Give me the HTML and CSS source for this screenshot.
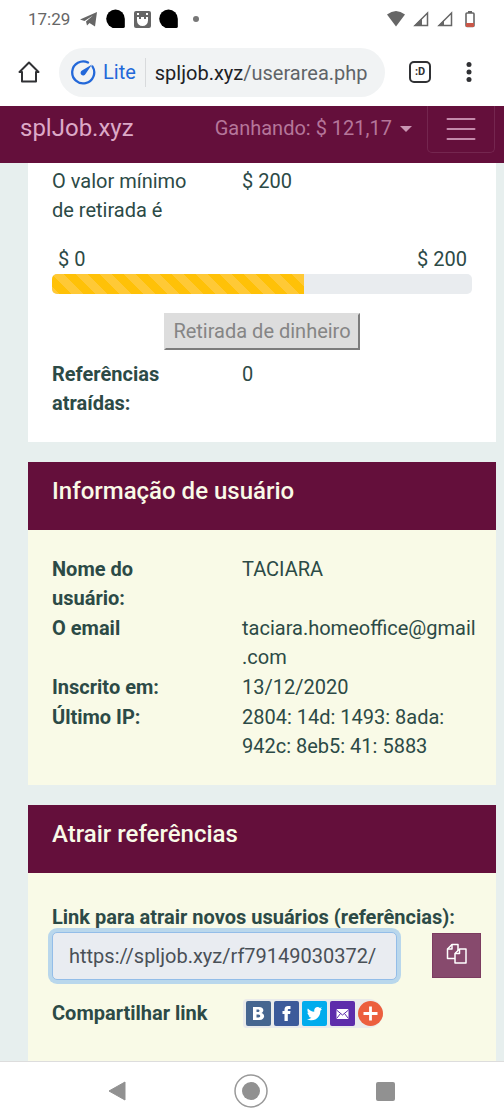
FILE: index.html
```html
<!DOCTYPE html>
<html lang="pt">
<head>
<meta charset="utf-8">
<meta name="viewport" content="width=device-width, initial-scale=1">
<title>splJob.xyz</title>
<link rel="stylesheet" href="styles.css">
</head>
<body>
<div class="screen">
  <div class="status">
    <span class="clock">17:29</span>
    <svg width="18" height="16" viewBox="0 0 18 16"><path fill="#666" d="M0 8.500 17 1 15 15.500 9.500 12 7 14.500 6 10.500 13 4.500 4.500 10z"/></svg>
    <svg class="blob" width="20" height="20" viewBox="0 0 20 20"><path d="M9.500 0.500a9.300 9.300 0 0 1 9.300 9.300V17.500q0 1.600-1.600 1.600H9.500A9.300 9.300 0 0 1 9.500.5z"/></svg>
    <svg class="face" width="17" height="17" viewBox="0 0 17 17"><rect width="17" height="17" rx="2" fill="#666"/><path fill="#fff" d="M3 6h11v3.500a5.500 5.500 0 0 1-11 0zM3 2h2v2H3zM12 2h2v2h-2z"/><path fill="#666" d="M5 6h2v2H5zM10 6h2v2h-2z"/></svg>
    <svg class="blob" width="20" height="20" viewBox="0 0 20 20"><path d="M9.500 0.500a9.300 9.300 0 0 1 9.300 9.300V17.500q0 1.600-1.600 1.600H9.500A9.300 9.300 0 0 1 9.500.5z"/></svg>
    <span class="dot"></span>
    <span class="signals">
      <svg width="18" height="16" viewBox="0 0 18 16"><path fill="#666" d="M0 3.500Q9-3.500 18 3.500L9 15.500z"/></svg>
      <svg width="16" height="16" viewBox="0 0 16 16"><path fill="none" stroke="#666" stroke-width="1.500" d="M14.500 2v12.500H2z"/><path fill="#666" d="M1 15 9 7v8z"/></svg>
      <svg width="16" height="16" viewBox="0 0 16 16"><path fill="none" stroke="#666" stroke-width="1.500" d="M14.500 2v12.500H2z"/><path fill="#666" d="M1 15 7 9v6z"/></svg>
      <svg width="10" height="17" viewBox="0 0 10 17"><path fill="#666" d="M3 0h4v2H3z"/><rect x="1" y="2" width="8" height="13.500" rx="1" fill="none" stroke="#666" stroke-width="1.600"/><path fill="#c95748" d="M1 12h8v4H1z"/></svg>
    </span>
  </div>

  <div class="browser">
    <button class="plain" aria-label="Home"><svg width="22" height="22" viewBox="0 0 22 22"><path fill="none" stroke="#303134" stroke-width="2" stroke-linejoin="round" d="M1.500 11 11 1.500 20.500 11H18v9.500H4V11z"/></svg></button>
    <div class="address">
      <svg width="25" height="25" viewBox="0 0 25 25"><path fill="none" stroke="#2368d9" stroke-width="2.300" stroke-linecap="round" d="M17 2.500A11 11 0 1 0 21.500 6.500"/><path fill="#2368d9" d="M21 4.500 14.500 14A2.600 2.600 0 1 1 11 10.500z"/></svg>
      <span class="lite">Lite</span>
      <span class="url"><b>spljob.xyz</b>/userarea.php</span>
    </div>
    <button class="tabs" aria-label="Abas">:D</button>
    <button class="plain more" aria-label="Menu"><svg width="6" height="20" viewBox="0 0 6 20"><g fill="#303134"><circle cx="3" cy="2.500" r="2.500"/><circle cx="3" cy="10" r="2.500"/><circle cx="3" cy="17.500" r="2.500"/></g></svg></button>
  </div>

  <header class="navbar">
    <a class="brand" href="#">splJob.xyz</a>
    <a class="earning" href="#">Ganhando: $ 121,17 <span class="caret"></span></a>
    <button class="toggler" aria-label="Navegação"><svg width="30" height="24" viewBox="0 0 30 24"><path stroke="#c48aab" stroke-width="2" stroke-linecap="round" d="M1.500 2h27M1.500 12h27M1.500 22h27"/></svg></button>
  </header>

  <main class="page">
    <section class="card balance">
      <div class="row"><span class="term">O valor mínimo de retirada é</span><span>$ 200</span></div>
      <div class="scale"><span>$ 0</span><span>$ 200</span></div>
      <div class="progress"><div class="bar" style="width: 60%"></div></div>
      <button class="withdraw" disabled>Retirada de dinheiro</button>
      <div class="row"><b class="term">Referências atraídas:</b><span>0</span></div>
    </section>

    <section class="card cream">
      <h2>Informação de usuário</h2>
      <div class="info">
        <div class="row"><b class="term">Nome do usuário:</b><span>TACIARA</span></div>
        <div class="row"><b class="term">O email</b><span class="value">taciara.homeoffice@gmail<wbr>.com</span></div>
        <div class="row"><b class="term">Inscrito em:</b><span>13/12/2020</span></div>
        <div class="row"><b class="term">Último IP:</b><span>2804: 14d: 1493: 8ada: 942c: 8eb5: 41: 5883</span></div>
      </div>
    </section>

    <section class="card cream refer">
      <h2>Atrair referências</h2>
      <div class="links">
        <label for="ref">Link para atrair novos usuários (referências):</label>
        <div class="copyrow">
          <input id="ref" type="text" value="https://spljob.xyz/rf79149030372/" readonly>
          <button class="copy" aria-label="Copiar"><svg width="22" height="22" viewBox="0 0 22 22"><g fill="#874a6d" stroke="#fff" stroke-width="1.500" stroke-linejoin="round"><path d="M6 1.500h6v14H1.500V6z"/><path fill="none" d="M6 1.500V6H1.500"/><path d="M13.500 6H20v14H9v-9.500z"/><path fill="none" d="M13.500 6v4.500H9"/></g></svg></button>
        </div>
        <div class="share">
          <b>Compartilhar link</b>
          <div class="icons">
            <a href="#" aria-label="VK"><svg width="25" height="25" viewBox="0 0 25 25"><rect width="25" height="25" rx="2" fill="#466690"/><path fill="#fff" fill-rule="evenodd" d="M7 6h6c5 0 5.500 4.500 2.500 6 4 1 3.500 7-2 7H7zm3.500 2.500v2.500H12c2 0 2-2.500 0-2.500zm0 5v3h2c2.300 0 2.300-3 0-3z"/></svg></a>
            <a href="#" aria-label="Facebook"><svg width="25" height="25" viewBox="0 0 25 25"><rect width="25" height="25" rx="2" fill="#3c5a9a"/><path fill="#fff" d="M10.500 20v-7H8.500v-3h2V8.500C10.500 6 12 5 14 5h2.500v3H15c-1 0-1.200.5-1.200 1.200V10h2.700l-.4 3h-2.300v7z"/></svg></a>
            <a href="#" aria-label="Twitter"><svg width="25" height="25" viewBox="0 0 25 25"><rect width="25" height="25" rx="2" fill="#00aced"/><path fill="#fff" d="M20 8.300l-1.600 1.500C18.400 16 14 19.300 9.500 19.300c-1.600 0-3.200-.4-4.500-1.300 1.700.2 3.200-.3 4.400-1.200-1.400-.1-2.500-1-2.900-2.200h1.400C6.400 14.200 5.400 13 5.400 11.500l1.400.4C5.400 10.800 5 9 5.900 7.500c1.600 1.900 3.800 3 6.400 3.200C11.700 8.300 13.400 6 15.600 6c.9 0 1.700.4 2.300 1l2-.8-1.300 1.900z"/></svg></a>
            <a href="#" aria-label="Email"><svg width="25" height="25" viewBox="0 0 25 25"><rect width="25" height="25" rx="2" fill="#5d2cab"/><rect x="6.500" y="8" width="12" height="10" rx="1" fill="#fff"/><path fill="none" stroke="#5d2cab" d="M6.500 9l6 5 6-5M7 17l3.500-4.500M18 17l-3.500-4.500"/></svg></a>
            <a href="#" aria-label="Mais"><svg width="25" height="25" viewBox="0 0 25 25"><circle cx="12.500" cy="12.500" r="12.500" fill="#ec5f3e"/><path stroke="#fff" stroke-width="2.800" d="M5.500 12.500h14M12.500 5.500v14"/></svg></a>
          </div>
        </div>
      </div>
    </section>
  </main>

  <nav class="system">
    <button class="plain" aria-label="Voltar"><svg width="18" height="20" viewBox="0 0 18 20"><path fill="#919191" stroke="#919191" stroke-linejoin="round" d="M1 10 17 1v18z"/></svg></button>
    <button class="plain" aria-label="Início"><svg width="34" height="34" viewBox="0 0 34 34"><circle cx="17" cy="17" r="16" fill="none" stroke="#999" stroke-width="1.500"/><circle cx="17" cy="17" r="9" fill="#919191"/></svg></button>
    <button class="plain" aria-label="Recentes"><svg width="19" height="19" viewBox="0 0 19 19"><rect width="19" height="19" rx="2" fill="#919191"/></svg></button>
  </nav>
</div>
</body>
</html>
```
FILE: styles.css
```css
* { box-sizing: border-box; }
body {
  margin: 0;
  background: #e7efee;
  color: #2c4a46;
  font: 20px/29px Roboto, "Liberation Sans", sans-serif;
}
svg { display: block; flex: none; }
button { font-family: inherit; cursor: pointer; }
a { color: inherit; text-decoration: none; }
.screen { min-height: 100vh; display: flex; flex-direction: column; }
.plain { display: block; padding: 0; border: 0; background: none; }

.status {
  display: flex;
  align-items: center;
  height: 38px;
  padding: 0 29px 0 28px;
  background: #fff;
}
.clock { margin-right: 10px; font-size: 17px; color: #666; }
.blob { margin-left: 8px; }
.face { margin-left: 8px; }
.dot { width: 6px; height: 6px; margin-left: 14px; border-radius: 50%; background: #777; }
.signals { display: flex; gap: 8px; margin-left: auto; }
.signals svg:last-child { margin-left: 4px; }

.browser {
  display: flex;
  align-items: center;
  height: 68px;
  padding: 0 32px 0 18px;
  background: #fff;
}
.address {
  flex: 1;
  display: flex;
  align-items: center;
  height: 49px;
  margin: 0 24px 0 19px;
  padding-left: 12px;
  border-radius: 25px;
  background: #f1f3f4;
  white-space: nowrap;
}
.lite {
  margin-left: 7px;
  padding-right: 9px;
  border-right: 1px solid #d8dadc;
  color: #2368d9;
}
.url { margin-left: 9px; padding-top: 2px; color: #5f6368; }
.url b { font-weight: 400; color: #202124; }
.tabs {
  width: 22px;
  height: 22px;
  padding: 0;
  border: 2px solid #303134;
  border-radius: 5px;
  background: none;
  color: #303134;
  font-size: 11px;
  font-weight: 700;
  line-height: 16px;
}
.more { margin-left: 35px; }

.navbar {
  display: flex;
  align-items: flex-start;
  height: 57px;
  padding: 0 9px 0 20px;
  background: #640f3b;
  color: #dca9c7;
}
.brand { padding-top: 8px; font-size: 24px; }
.earning {
  display: flex;
  align-items: center;
  margin-left: auto;
  padding-top: 8px;
  color: #b5769a;
  white-space: nowrap;
}
.caret {
  margin-left: 8px;
  border: 6px solid transparent;
  border-top-color: #c995b2;
  border-bottom: 0;
}
.toggler {
  display: flex;
  justify-content: center;
  width: 68px;
  height: 47px;
  margin-left: 15px;
  padding: 11px 0 0;
  border: 1px solid #74264f;
  border-top: 0;
  border-radius: 0 0 5px 5px;
  background: none;
}

.page {
  flex: 1;
  display: flex;
  flex-direction: column;
  gap: 20px;
  padding: 0 8px 0 28px;
}
.card { background: #fff; }
.cream { background: #f9fae7; }
.balance { padding: 4px 24px 24px; }
.row { display: flex; }
.row .term { flex: none; width: 150px; margin-right: 40px; }
.value { min-width: 0; }
b, label { font-weight: 700; }
.scale { display: flex; justify-content: space-between; margin-top: 20px; padding: 0 5px 0 6px; }
.progress {
  height: 20px;
  overflow: hidden;
  border-radius: 5px;
  background: #e9ecef;
}
.bar {
  height: 100%;
  background: linear-gradient(45deg, #ffc936 25%, #ffc107 25%, #ffc107 50%, #ffc936 50%, #ffc936 75%, #ffc107 75%) 0 0 / 24px 24px;
}
.withdraw {
  display: block;
  margin: 19px auto 10px;
  padding: 3px 7px;
  border: 2px solid;
  border-color: #ddd #7c7c7c #7c7c7c #ddd;
  background: #ddd;
  color: #858585;
  font-size: 20px;
  line-height: 27px;
}
h2 {
  margin: 0;
  padding: 14px 24px 24px;
  background: #640f3b;
  color: #f9fae7;
  font-size: 24px;
  font-weight: 500;
  line-height: 30px;
}
.info { display: grid; gap: 1px; padding: 25px 24px 24px; }
.refer { flex: 1; }
.links { padding: 30px 15px 0 24px; }
label { display: block; white-space: nowrap; }
.copyrow { display: flex; justify-content: space-between; align-items: flex-start; }
input {
  width: 345px;
  height: 48px;
  padding: 0 16px;
  border: 1px solid #93bde8;
  border-radius: 5px;
  outline: 0;
  background: #e9ecf1;
  box-shadow: 0 0 0 4px #b9d7ec;
  color: #495057;
  font: inherit;
}
.copy {
  display: flex;
  justify-content: center;
  width: 49px;
  height: 45px;
  margin-top: 1px;
  padding: 9px 0 0;
  border: 1px solid #7c3c60;
  background: #874a6d;
}
.share { display: flex; align-items: center; margin-top: 19px; }
.share b { width: 191px; }
.icons { display: flex; gap: 3px; padding: 2px 0 2px 3px; border-radius: 4px 15px 15px 4px; background: #eaebeb; }

.system {
  display: flex;
  justify-content: space-between;
  align-items: center;
  height: 59px;
  padding: 0 109px 0 108px;
  border-top: 1px solid #ddd;
  background: #fff;
}
```
